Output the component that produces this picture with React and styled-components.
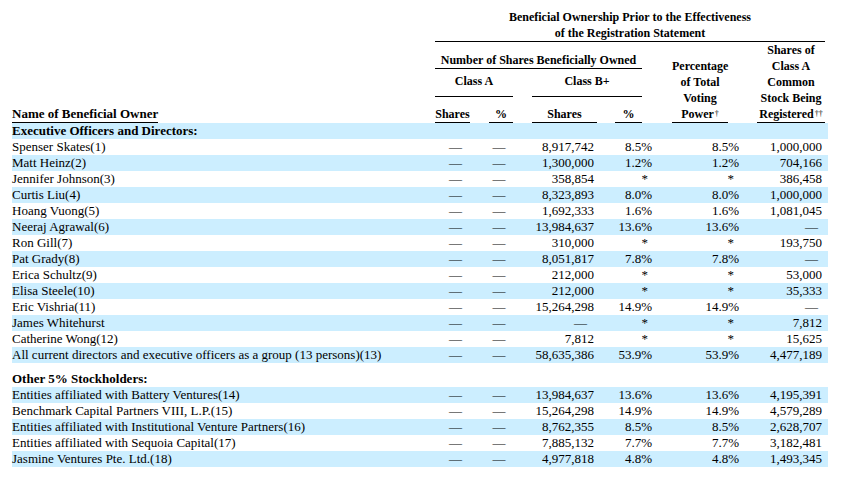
import styled, { createGlobalStyle } from 'styled-components'

const COLS = '423px 35px 19px 24px 19px 65px 18px 27px 30px 56px 29px 68px 3px'

const GlobalStyle = createGlobalStyle`
  body {
    margin: 0;
    background: #fff;
  }
`

const Page = styled.div`
  padding: 9px 0 0 12px;
  width: 816px;
  font-family: "Liberation Serif", "Times New Roman", serif;
  font-size: 13px;
  color: #000;
`

const Head = styled.div`
  display: grid;
  grid-template-columns: ${COLS};
  grid-template-rows: auto 27px 28px 26px;
  font-weight: bold;
  font-size: 12px;
  line-height: 16px;
`

const Title = styled.div`
  grid-column: 2 / 13;
  grid-row: 1;
  text-align: center;
  border-bottom: 1px solid #000;
`

const Label = styled.div`
  grid-column: ${p => p.$col};
  grid-row: ${p => p.$row};
  align-self: end;
  text-align: center;
  white-space: nowrap;
  border-bottom: 1px solid #000;
  padding-bottom: ${p => p.$pb || 0}px;
`

const NameLabel = styled.div`
  grid-column: 1;
  grid-row: 4;
  align-self: end;
  font-size: 13px;

  span {
    display: inline-block;
    border-bottom: 1px solid #000;
  }
`

const Dagger = styled.span`
  font-size: 8px;
  font-weight: normal;
  vertical-align: 2px;
  margin-left: 1px;
`

const Row = styled.div`
  display: grid;
  grid-template-columns: ${COLS};
  height: 16px;
  line-height: 16px;
  white-space: nowrap;
  background: ${p => (p.$shade ? '#cceeff' : 'transparent')};
  margin-top: ${p => (p.$gap ? 8 : 0)}px;
`

const Owner = styled.div`
  grid-column: 1;
  font-weight: ${p => (p.$bold ? 'bold' : 'normal')};
`

const Cell = styled.div`
  grid-column: ${p => p.$col};
  text-align: ${p => p.$align || 'right'};
  padding-left: ${p => p.$pl || 0}px;
  padding-right: ${p => p.$pr || 0}px;
`

const DASH = '\u2014'

const executives = [
  ['Spenser Skates(1)', '8,917,742', '8.5%', '8.5%', '1,000,000'],
  ['Matt Heinz(2)', '1,300,000', '1.2%', '1.2%', '704,166'],
  ['Jennifer Johnson(3)', '358,854', '*', '*', '386,458'],
  ['Curtis Liu(4)', '8,323,893', '8.0%', '8.0%', '1,000,000'],
  ['Hoang Vuong(5)', '1,692,333', '1.6%', '1.6%', '1,081,045'],
  ['Neeraj Agrawal(6)', '13,984,637', '13.6%', '13.6%', DASH],
  ['Ron Gill(7)', '310,000', '*', '*', '193,750'],
  ['Pat Grady(8)', '8,051,817', '7.8%', '7.8%', DASH],
  ['Erica Schultz(9)', '212,000', '*', '*', '53,000'],
  ['Elisa Steele(10)', '212,000', '*', '*', '35,333'],
  ['Eric Vishria(11)', '15,264,298', '14.9%', '14.9%', DASH],
  ['James Whitehurst', DASH, '*', '*', '7,812'],
  ['Catherine Wong(12)', '7,812', '*', '*', '15,625'],
  ['All current directors and executive officers as a group (13 persons)(13)', '58,635,386', '53.9%', '53.9%', '4,477,189'],
]

const holders = [
  ['Entities affiliated with Battery Ventures(14)', '13,984,637', '13.6%', '13.6%', '4,195,391'],
  ['Benchmark Capital Partners VIII, L.P.(15)', '15,264,298', '14.9%', '14.9%', '4,579,289'],
  ['Entities affiliated with Institutional Venture Partners(16)', '8,762,355', '8.5%', '8.5%', '2,628,707'],
  ['Entities affiliated with Sequoia Capital(17)', '7,885,132', '7.7%', '7.7%', '3,182,481'],
  ['Jasmine Ventures Pte. Ltd.(18)', '4,977,818', '4.8%', '4.8%', '1,493,345'],
]

const DataRow = ({ row, shade }) => {
  const [name, shares, pct, vote, reg] = row
  return (
    <Row $shade={shade}>
      <Owner>{name}</Owner>
      <Cell $col="2" $align="center" $pl={6}>{DASH}</Cell>
      <Cell $col="4" $align="center" $pr={4}>{DASH}</Cell>
      <Cell $col="6" $pr={shares === DASH ? 10 : 3}>{shares}</Cell>
      <Cell $col="8 / 10" $pr={pct === '*' ? 24 : 20}>{pct}</Cell>
      <Cell $col="10 / 12" $pr={vote === '*' ? 23 : 18}>{vote}</Cell>
      <Cell $col="12 / 14" $pr={reg === DASH ? 10 : 6}>{reg}</Cell>
    </Row>
  )
}

const Section = ({ title, rows, shadeFirst, gap }) => (
  <>
    <Row $shade={shadeFirst} $gap={gap}>
      <Owner $bold>{title}</Owner>
    </Row>
    {rows.map((row, i) => (
      <DataRow key={row[0]} row={row} shade={(i % 2 === 0) !== shadeFirst} />
    ))}
  </>
)

const App = () => (
  <Page>
    <GlobalStyle />
    <Head>
      <Title>
        Beneficial Ownership Prior to the Effectiveness
        <br />
        of the Registration Statement
      </Title>
      <Label $col="2 / 9" $row="2">Number of Shares Beneficially Owned</Label>
      <Label $col="2 / 5" $row="3" $pb={7}>Class A</Label>
      <Label $col="6 / 9" $row="3" $pb={7}>Class B+</Label>
      <Label $col="2" $row="4">Shares</Label>
      <Label $col="4" $row="4">%</Label>
      <Label $col="6" $row="4">Shares</Label>
      <Label $col="8" $row="4">%</Label>
      <Label $col="10" $row="2 / 5">
        Percentage
        <br />
        of Total
        <br />
        Voting
        <br />
        Power<Dagger>†</Dagger>
      </Label>
      <Label $col="12" $row="1 / 5">
        Shares of
        <br />
        Class A
        <br />
        Common
        <br />
        Stock Being
        <br />
        Registered<Dagger>††</Dagger>
      </Label>
      <NameLabel>
        <span>Name of Beneficial Owner</span>
      </NameLabel>
    </Head>
    <Section title="Executive Officers and Directors:" rows={executives} shadeFirst />
    <Section title="Other 5% Stockholders:" rows={holders} shadeFirst={false} gap />
  </Page>
)

export default App
